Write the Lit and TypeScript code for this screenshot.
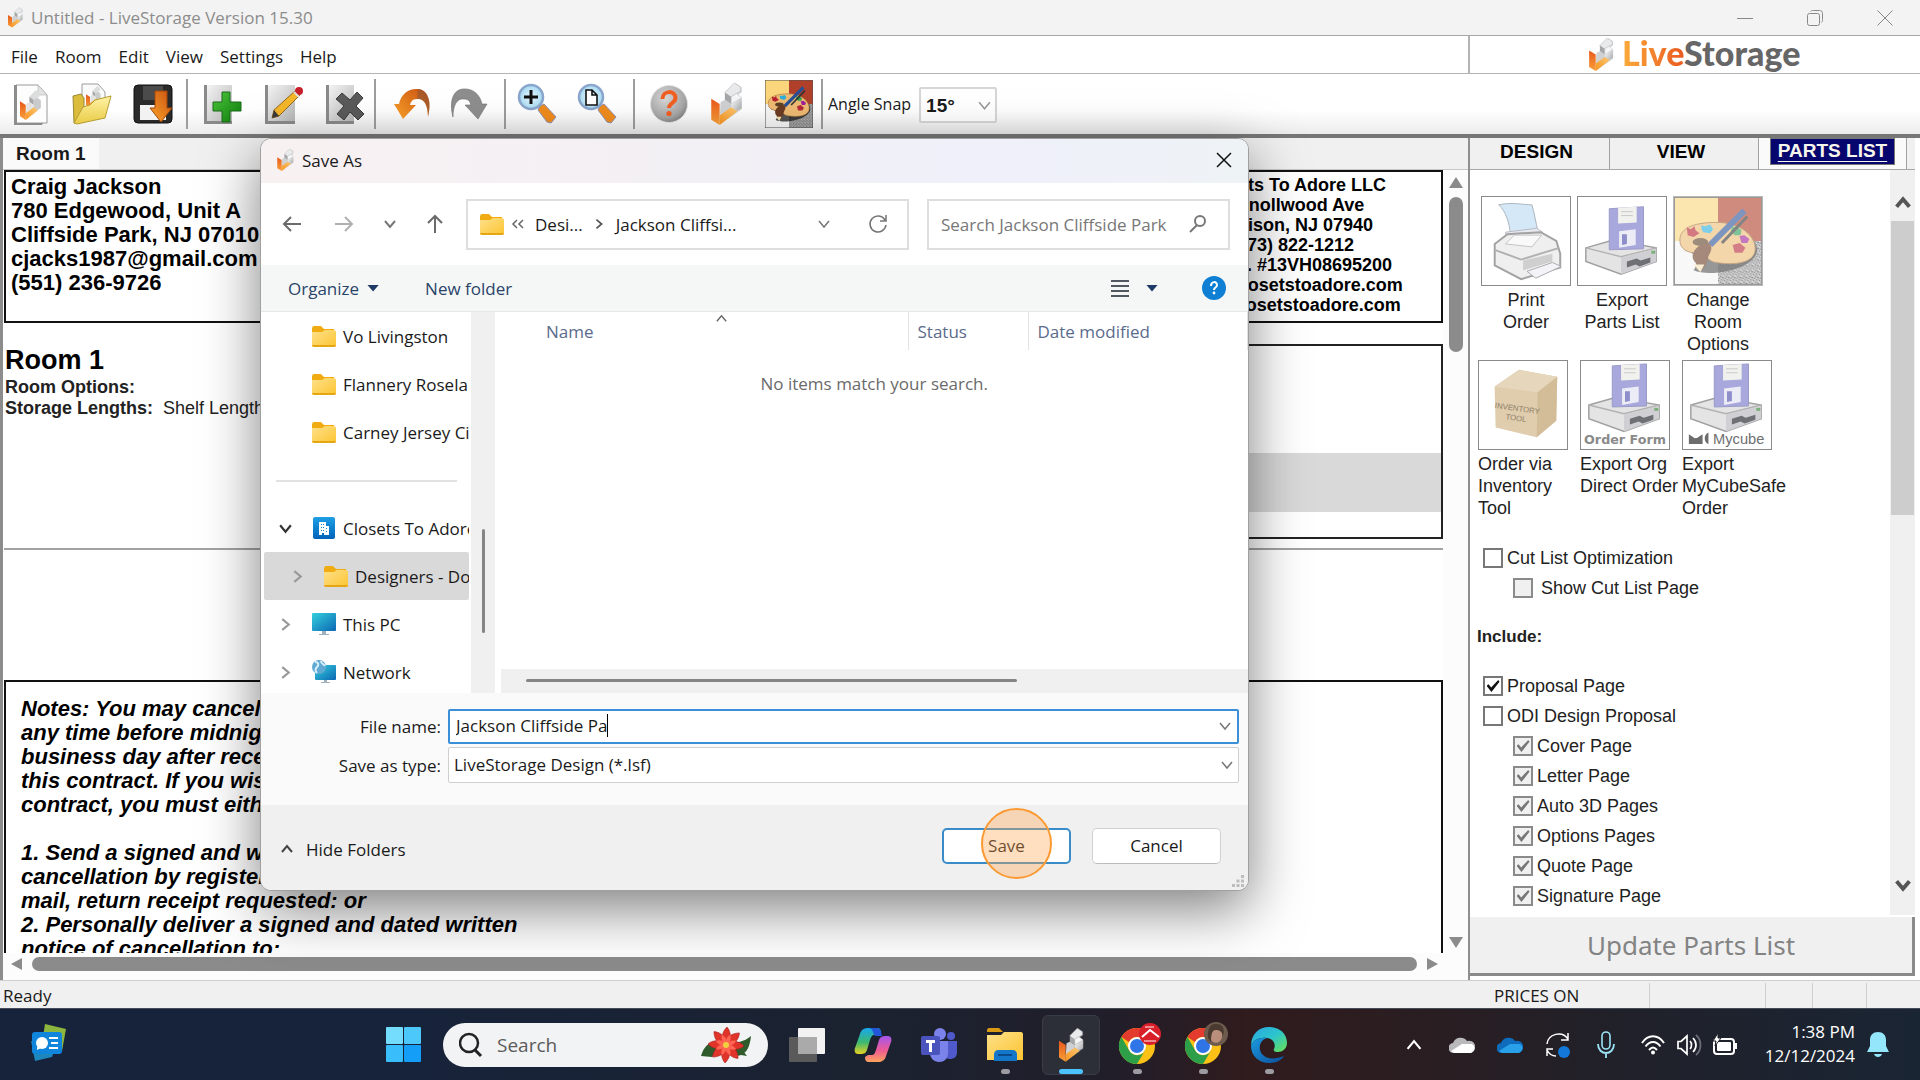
import { LitElement, html, svg, css } from "lit";
import { customElement, state } from "lit/decorators.js";

/* ---------- shared artwork ---------- */

const gradients = html`<svg class="defs" width="0" height="0" aria-hidden="true">
  <defs>
    <linearGradient id="gOrange" x1="0" y1="1" x2="1" y2="0"><stop offset="0" stop-color="#f7941e"/><stop offset="1" stop-color="#fcc873"/></linearGradient>
    <linearGradient id="gRed" x1="0" y1="0" x2="0" y2="1"><stop offset="0" stop-color="#e8581a"/><stop offset="1" stop-color="#f9a13a"/></linearGradient>
    <linearGradient id="gGray" x1="0" y1="0" x2="1" y2="1"><stop offset="0" stop-color="#ffffff"/><stop offset="1" stop-color="#9c9ea0"/></linearGradient>
    <linearGradient id="gPage" x1="0" y1="0" x2="1" y2="1"><stop offset="0" stop-color="#f4f4f4"/><stop offset="1" stop-color="#b4b4b4"/></linearGradient>
    <linearGradient id="gFolder" x1="0" y1="0" x2="1" y2="1"><stop offset="0" stop-color="#ffe08a"/><stop offset="1" stop-color="#fbc532"/></linearGradient>
    <linearGradient id="gOldFolder" x1="0" y1="0" x2="0" y2="1"><stop offset="0" stop-color="#fff3a8"/><stop offset="1" stop-color="#e9cb45"/></linearGradient>
    <linearGradient id="gGreen" x1="0" y1="0" x2="1" y2="1"><stop offset="0" stop-color="#4cc63a"/><stop offset="1" stop-color="#0d7a0d"/></linearGradient>
    <linearGradient id="gUndo" x1="0" y1="1" x2="1" y2="0"><stop offset="0" stop-color="#ffa52a"/><stop offset="1" stop-color="#c64f10"/></linearGradient>
    <linearGradient id="gScreen" x1="0" y1="0" x2="1" y2="1"><stop offset="0" stop-color="#35d0dd"/><stop offset="1" stop-color="#0c67b4"/></linearGradient>
    <linearGradient id="gBlue" x1="0" y1="0" x2="0" y2="1"><stop offset="0" stop-color="#1f9fe6"/><stop offset="1" stop-color="#0063b8"/></linearGradient>
    <linearGradient id="gCopA" x1="0" y1="0" x2="0" y2="1"><stop offset="0" stop-color="#18a7f0"/><stop offset=".55" stop-color="#3cb96f"/><stop offset="1" stop-color="#e8d321"/></linearGradient>
    <linearGradient id="gCopB" x1="0" y1="0" x2="0" y2="1"><stop offset="0" stop-color="#a457ec"/><stop offset=".55" stop-color="#ef5a94"/><stop offset="1" stop-color="#fba35c"/></linearGradient>
    <linearGradient id="gEdgeA" x1="0" y1="0" x2="1" y2="1"><stop offset="0" stop-color="#2aa7e4"/><stop offset=".5" stop-color="#2cc5cc"/><stop offset="1" stop-color="#6be24f"/></linearGradient>
    <linearGradient id="gEdgeB" x1="0" y1="0" x2="1" y2="1"><stop offset="0" stop-color="#1b9be0"/><stop offset="1" stop-color="#0b4f9c"/></linearGradient>
    <radialGradient id="gBall" cx=".4" cy=".35" r=".7"><stop offset="0" stop-color="#d8d8d8"/><stop offset=".75" stop-color="#a5a5a5"/><stop offset="1" stop-color="#7b7b7b"/></radialGradient>
    <radialGradient id="gLens"><stop offset="0" stop-color="#ecfaff"/><stop offset="1" stop-color="#a5d9f2"/></radialGradient>
    <pattern id="pGrain" width="6" height="6" patternUnits="userSpaceOnUse"><rect width="6" height="6" fill="#9b9b9b"/><path d="M0 0h1v1H0zM3 1h1v1H3zM5 3h1v1H5zM1 4h2v1H1zM4 5h1v1H4z" fill="#4a4a4a"/><path d="M2 2h1v1H2zM4 0h1v1H4zM0 5h1v1H0zM3 3h1v1H3z" fill="#d8d8d8"/></pattern>
  </defs>
</svg>`;

const mark = (w: number, h: number) => html`<svg width=${w} height=${h} viewBox="0 0 30 40" aria-hidden="true">
  <path d="M9 30 9 20 14 16 14 10 23 0 29 4 29 9 24 12 29 16 29 25 9 39z" fill="#8b8d8f" opacity=".35"/>
  <path d="M13 9 22 0 28 4 28 8 19 13 19 15z" fill="#e9eaeb" stroke="#b9bbbd" stroke-width=".7"/>
  <path d="M13 9 19 13 19 20 13 16z" fill="#a5a7a9"/>
  <path d="M19 13 24 10 29 14 19 20z" fill="#f6f6f6" stroke="#c0c2c4" stroke-width=".6"/>
  <path d="M19 20 29 14 29 24 19 30z" fill="url(#gGray)"/>
  <path d="M9 18 13 16 19 20 19 29 8 36z" fill="#d0d1d2"/>
  <path d="M0 15 8 20 8 40 0 35z" fill="url(#gRed)"/>
  <path d="M8 31 19 23 25 27 8 40z" fill="url(#gOrange)"/>
</svg>`;

const markShape = (t: string) => svg`<g transform=${t}>
  <path d="M13 9 22 0 28 4 28 8 19 13z" fill="#dcdddd"/><path d="M13 9 19 13 19 20 13 16z" fill="#a5a7a9"/>
  <path d="M19 13 24 10 29 14 29 24 19 30z" fill="#c9cacb"/><path d="M9 18 13 16 19 20 19 29 8 36z" fill="#e3e3e3"/>
  <path d="M0 15 8 20 8 40 0 35z" fill="url(#gRed)"/><path d="M8 31 19 23 25 27 8 40z" fill="url(#gOrange)"/></g>`;

const icoNew = html`<svg width="38" height="44" viewBox="0 0 38 44"><path d="M4 3h22l9 10v28H4z" fill="#fdfdfd" stroke="#9a9a9a"/><path d="M2 3h3v38h26l-1 2H2z" fill="#8d8d8d"/><path d="M26 3l9 10h-9z" fill="#e2e2e2" stroke="#b4b4b4" stroke-width=".6"/>${markShape("translate(8 8) scale(.72 .75)")}</svg>`;
const icoOpen = html`<svg width="42" height="44" viewBox="0 0 42 44"><path d="M12 2h16l7 8v22H12z" fill="#fafafa" stroke="#9a9a9a"/>${markShape("translate(16 4) scale(.5 .55)")}<path d="M3 14l8-2 3 4v24l-10 1z" fill="#dcbc3c" stroke="#9b8a34"/><path d="M13 25l7-2 5-5 16-4-6 22-28 6-3-1z" fill="url(#gOldFolder)" stroke="#b59d32"/></svg>`;
const icoSave = html`<svg width="42" height="44" viewBox="0 0 42 44"><rect x="2" y="3" width="38" height="38" rx="4" fill="#2a2a2a" stroke="#111"/><path d="M11 4h20v14H11z" fill="#4b4b4b"/><path d="M8 23h26v15H8z" fill="#f2f2f2"/><path d="M23 9h12v17h5L29 40 18 26h5z" fill="url(#gUndo)" stroke="#a34708"/></svg>`;
const icoAdd = html`<svg width="42" height="44" viewBox="0 0 42 44"><path d="M4 3h26v38H4z" fill="url(#gPage)"/><path d="M2 3h3v36h25v3H2z" fill="#8a8a8a"/><path d="M20 10h8v10h11v9H28v11h-8V29h-9v-9h9z" fill="url(#gGreen)" stroke="#1a6a1a"/></svg>`;
const icoEdit = html`<svg width="42" height="44" viewBox="0 0 42 44"><path d="M4 3h28v38H4z" fill="url(#gPage)"/><path d="M2 3h3v36h27v3H2z" fill="#8a8a8a"/><path d="M9 36l2-8L32 9l5 4-21 21z" fill="#f4b72a" stroke="#96691a"/><path d="M9 36l2-8 5 6z" fill="#3a3a3a"/><circle cx="36" cy="9" r="4" fill="#c8202a"/><path d="M31 10l5 5" stroke="#ddd" stroke-width="2"/></svg>`;
const icoDel = html`<svg width="42" height="44" viewBox="0 0 42 44"><path d="M4 3h26v38H4z" fill="url(#gPage)"/><path d="M2 3h3v36h25v3H2z" fill="#8a8a8a"/><path d="M18 11l8 7 7-8 6 6-7 8 8 8-6 6-8-8-6 8-7-6 7-8-8-7z" fill="#5a5a5a" stroke="#3b3b3b"/></svg>`;
const icoUndo = html`<svg width="42" height="34" viewBox="0 0 42 34"><path d="M2 17l5 0C9 7 17 1 26 2c10 1 14 12 10 28C36 18 32 11 25 12c-5 0-6 3-7 6h6L11 32z" fill="url(#gUndo)"/><path d="M26 2c10 1 14 12 10 28C36 18 32 11 25 12" fill="#7b5340" opacity=".45"/></svg>`;
const icoRedo = html`<svg width="42" height="34" viewBox="0 0 42 34"><path d="M40 17l-5 0C33 7 25 1 16 2 6 3 2 14 6 30 6 18 10 11 17 12c5 0 6 3 7 6h-6L31 32z" fill="#8e8e8e" stroke="#737373" stroke-width=".6"/></svg>`;
const icoZoom = (inner: unknown) => html`<svg width="42" height="42" viewBox="0 0 42 42"><path d="M24 23l4-2 12 13-5 6-4-1-9-12z" fill="#f08c1e" stroke="#8f8fb0"/><circle cx="15" cy="14" r="12" fill="url(#gLens)" stroke="#8aa6cc" stroke-width="2.5"/>${inner}</svg>`;
const zPlus = svg`<path d="M15 7v14M8 14h14" stroke="#111" stroke-width="3"/>`;
const zPage = svg`<path d="M10 7h6l5 5v10H10z M16 7v5h5" fill="#fff" stroke="#111" stroke-width="1.6"/>`;
const icoHelp = html`<svg width="40" height="40" viewBox="0 0 40 40"><circle cx="20" cy="20" r="18.500" fill="url(#gBall)" stroke="#e2e2e2"/><path d="M13.500 15c0-9 13-9 13-1 0 5-6.500 5-6.500 10" fill="none" stroke="#f15f22" stroke-width="4"/><circle cx="20" cy="29.500" r="2.600" fill="#f15f22"/></svg>`;
const icoPalette = (size: number, cls = "") => html`<svg class=${cls} width=${size} height=${size} viewBox="0 0 90 90"><rect width="45" height="45" fill="#fbd67c"/><rect x="45" width="45" height="45" fill="#b0402a"/><rect y="45" width="45" height="45" fill="#f5f5f5"/><rect x="45" y="45" width="45" height="45" fill="url(#pGrain)"/>
  <path d="M10 57c2-6 20 4 10 18 18 8 66-2 65-22-2-16-30-28-55-24" fill="#1c1c1c" opacity=".75"/>
  <path d="M6 44C6 30 24 26 44 26c24 0 40 14 39 28-1 14-22 16-40 13-8-1-10-8-17-9C14 57 6 54 6 44z" fill="#eebb74" stroke="#9d6b36"/>
  <ellipse cx="27" cy="46" rx="8" ry="4" fill="#5d4126"/><path d="M13 31l4 2 4-3 1 4 4 3-6 4-6-2z" fill="#b8202e"/><path d="M28 29l4 1 5-2 3 5-3 4-7-1-2-3z" fill="#29b0dc"/><path d="M59 31l5-1 5 4-1 5-6 0-4-4z" fill="#2d9b56"/><path d="M67 40l5-1 5 4-2 4-6 0z" fill="#a01e9a"/><path d="M60 49l7-2 6 5-3 5-8 0z" fill="#b62a38"/>
  <path d="M75 20l-26 27" stroke="#333" stroke-width="3"/><path d="M72 14L37 49" stroke="#274f96" stroke-width="6"/><path d="M36 47c-9 0-16 6-17 13 0 7 5 6 8 17 5-6 8-12 8-16 3-6 5-9 1-14z" fill="#6a3c22"/><path d="M20 69l7 8 4-8z" fill="#f3e1b5"/><rect x=".5" y=".5" width="89" height="89" fill="none" stroke="#555"/></svg>`;
const icoPrinter = html`<svg width="90" height="90" viewBox="0 0 90 90"><path d="M17 8c14-3 26 0 34 0 3 10 4 18 6 26l-28 4C28 26 24 14 17 8z" fill="#d5e8f8" stroke="#aab4bc"/><path d="M24 36l32-4 6 4-2 7-34 1z" fill="#e8eaf2" stroke="#b8bac2"/><path d="M13 48l13-10 34-2 16 9 4 13v14l-40 12-27-14z" fill="#efefef" stroke="#a2a2a2" stroke-width="2"/><path d="M13 54l27 10 39-12" fill="none" stroke="#b0b0b0" stroke-width="2"/><path d="M24 48l9-9 28 0-10 12z" fill="#f9f9f9" stroke="#c4c4c4"/><path d="M42 65l30-7v8l-30 9z" fill="#cfcfcf"/><path d="M46 76l26-9 9 4-26 12z" fill="#f4f4f8" stroke="#a9a9b0"/></svg>`;
const diskArt = (dy: number) => svg`<g transform=${`translate(0 ${dy})`}><path d="M8 52l28-8 44 8v14L44 79 8 66z" fill="#e4e4e4" stroke="#a0a0a0" stroke-width="1.500"/><path d="M8 52l36 9 36-9" fill="none" stroke="#b2b2b2" stroke-width="1.500"/><path d="M44 62v17l36-13V53z" fill="#cfcfd4"/><path d="M50 66l10-3 4 2 10-3v5l-11 4-4-2-9 3z" fill="#6f6f76"/><path d="M75 55h4v3h-4z" fill="#7bb07b"/><path d="M32 12l35-2v43l-35 1z" fill="#a8a8dc" stroke="#9a9ac8"/><path d="M41 11l19-1v16l-19 1z" fill="#f1f1ee"/><path d="M44 15h12M44 19h12" stroke="#c9c9c9"/><path d="M42 35l17-2v16l-17 3z" fill="#ececf6"/><path d="M45 38h5v10l-5 1z" fill="#8e8ecb"/></g>`;
const icoExport = html`<svg width="90" height="90" viewBox="0 0 90 90">${diskArt(0)}</svg>`;
const icoOrderForm = html`<svg width="90" height="90" viewBox="0 0 90 90">${diskArt(-7)}<text x="45" y="85" text-anchor="middle" class="t-form">Order Form</text></svg>`;
const icoMycube = html`<svg width="90" height="90" viewBox="0 0 90 90">${diskArt(-7)}<path d="M6 75l6 4 6-1v7H6zM14 79l6-4v10h-6zM26 73v12c-5-2-5-10 0-12z" fill="#6c6c6c"/><text x="57" y="85" text-anchor="middle" class="t-cube">Mycube</text></svg>`;
const icoBox = html`<svg width="90" height="90" viewBox="0 0 90 90"><path d="M16 26l25-17 39 7-1 45-20 17-42-10z" fill="#dfcdae"/><path d="M16 26l44 6 20-16-39-7z" fill="#e6d7bc"/><path d="M60 32l20-16-1 45-20 17z" fill="#d2bd98"/><g transform="rotate(8 38 50)"><text x="39" y="51" text-anchor="middle" class="t-box">INVENTORY</text><text x="39" y="61" text-anchor="middle" class="t-box">TOOL</text></g></svg>`;

const folder = html`<svg class="ico" width="24" height="21" viewBox="0 0 24 21"><path d="M0 3c0-2 1-3 2-3h7l3 3h10v7H0z" fill="#f0ac12"/><path d="M0 6h10l3-2h9c1 0 2 1 2 2v13c0 1-1 2-2 2H2c-1 0-2-1-2-2z" fill="url(#gFolder)"/><path d="M0 19c0 1 1 2 2 2h20c1 0 2-1 2-2z" fill="#e5a614"/></svg>`;
const building = html`<svg class="ico" width="24" height="22" viewBox="-1 0 24 22"><rect width="22" height="22" rx="2" fill="url(#gBlue)"/><path d="M6 5h7v4h3v9h-5v-2H9v2H6z" fill="#fff"/><path d="M8 7h1v1H8zM10 7h1v1h-1zM8 10h1v1H8zM10 10h1v1h-1zM8 13h1v1H8zM10 13h1v1h-1zM13 11h1v1h-1zM13 14h1v1h-1z" fill="#1480cc"/></svg>`;
const pc = html`<svg class="ico" width="24" height="24" viewBox="0 0 24 24"><rect y="1" width="24" height="18" rx="1" fill="url(#gScreen)"/><path d="M10 19h4v3h3v1H7v-1h3z" fill="#9fb0bf"/></svg>`;
const net = html`<svg class="ico" width="24" height="24" viewBox="0 0 24 24"><rect x="3" y="5" width="21" height="15" rx="1" fill="url(#gScreen)"/><path d="M12 20h3v2h3v1H9v-1h3z" fill="#9fb0bf"/><circle cx="7" cy="7" r="7" fill="#5fa9d2"/><path d="M3 2c4 0 4 3 2 5s-2 4 0 6M9 1c0 3 3 3 4 5" stroke="#d9eefb" stroke-width="2" fill="none"/></svg>`;

const chev = (d: "up" | "down" | "right", size = 14, color = "#444", sw = 2) => {
  const p = { up: "M2 10l5-6 5 6", down: "M2 4l5 6 5-6", right: "M4 2l6 5-6 5" }[d];
  return html`<svg class="chev" width=${size} height=${size} viewBox="0 0 14 14"><path d=${p} fill="none" stroke=${color} stroke-width=${sw}/></svg>`;
};

/* ---------- taskbar artwork ---------- */

const icoWidgets = html`<svg width="38" height="38" viewBox="0 0 38 38"><path d="M16 1l21 5-4 22-20-8z" fill="#8cb63e"/><path d="M2 18l24 8-3 8-17 4z" fill="#1c86bd"/><rect x="3" y="9" width="30" height="22" rx="3" fill="#0f86dc"/><circle cx="13" cy="20" r="6" fill="#fff"/><path d="M20 15h9M22 20h7M20 25h9" stroke="#fff" stroke-width="2"/><path d="M8 24v3l4-2z" fill="#fff"/></svg>`;
const icoStart = html`<svg width="36" height="36" viewBox="0 0 36 36"><rect width="17" height="17" rx="1" fill="#74dcfd"/><rect x="18" width="17" height="17" rx="1" fill="#4cc8fb"/><rect y="18" width="17" height="17" rx="1" fill="#3abefb"/><rect x="18" y="18" width="17" height="17" rx="1" fill="#149ef8"/></svg>`;
const petals = [0, 45, 90, 135, 180, 225, 270, 315];
const icoFlower = html`<svg width="52" height="36" viewBox="0 0 52 36"><path d="M1 29C4 18 12 12 22 16L12 30zM51 9C50 20 46 29 36 29L30 16C36 16 44 15 51 9zM40 20l7 9-12-2z" fill="#2f5a2c"/>${petals.map((a) => svg`<path transform=${`rotate(${a} 26 18)`} d="M26 18C20 12 22 5 27 0c5 6 4 13-1 18z" fill="#e0342a" stroke="#a81d1c" stroke-width=".6"/>`)}${petals.map((a) => svg`<path transform=${`rotate(${a + 22} 26 18)`} d="M26 18c-3-4-2-8 0-11 3 3 3 8 0 11z" fill="#ff6552"/>`)}<circle cx="26" cy="18" r="3" fill="#f0d03c"/></svg>`;
const icoTask = html`<svg width="38" height="36" viewBox="0 0 38 36"><rect x="1" y="10" width="28" height="25" rx="1" fill="#5a5a5a"/><rect x="10" y="1" width="27" height="26" rx="1" fill="#f2f2f2"/><path d="M10 10h19v17H10z" fill="#aaaaaa"/></svg>`;
const icoCopilot = html`<svg width="38" height="36" viewBox="0 0 38 36"><path d="M14 1h9c3 0 4 2 4 5l-3 2h-4c-2 0-3 2-4 5l-3 10c-1 3-3 4-6 4H4c-3 0-4-3-3-6L6 7c1-4 4-6 8-6z" fill="url(#gCopA)"/><path d="M14 1h9c3 0 4 3 5 8h-6c-2 0-2-2-3-4-1-3-2-4-5-4z" fill="#2357d8"/><path d="M24 35h-9c-3 0-4-2-4-5l3-2h4c2 0 3-2 4-5l3-10c1-3 3-4 6-4h3c3 0 4 3 3 6l-5 14c-1 4-4 6-8 6z" fill="url(#gCopB)"/></svg>`;
const icoTeams = html`<svg width="38" height="36" viewBox="0 0 38 36"><circle cx="20" cy="7" r="6" fill="#7b83eb"/><circle cx="31" cy="9" r="4" fill="#5059c9"/><path d="M25 14h12v11c0 5-3 7-7 7-3 0-5-2-5-4z" fill="#5059c9"/><path d="M10 14h18v12c0 6-4 9-9 9s-9-4-9-9z" fill="#7b83eb"/><rect x="1" y="9" width="19" height="19" rx="2" fill="#4b53bc"/><path d="M6 13h9v3h-3v9H9v-9H6z" fill="#fff"/></svg>`;
const icoExplorer = html`<svg width="38" height="36" viewBox="0 0 38 36"><path d="M1 3c0-1 1-2 2-2h10l4 4H1z" fill="#d99a12"/><path d="M1 8l14 0 3-3h17c1 0 2 1 2 2v26H1z" fill="url(#gFolder)"/><path d="M8 34v-7c0-2 2-4 4-4h15c2 0 4 2 4 4v7z" fill="#1377c9"/><path d="M12 28h14" stroke="#0a4a8a" stroke-width="2"/></svg>`;
const chromeArt = svg`<circle cx="20" cy="24" r="18" fill="#fbc116"/><path d="M4.400 15A18 18 0 0 1 35.600 15H20a9 9 0 0 0-8 5z" fill="#e33b2e"/><path d="M4.400 15A18 18 0 0 0 20 42l8-13.500A9 9 0 0 1 12 28z" fill="#2d9f48"/><circle cx="20" cy="24" r="9" fill="#fff"/><circle cx="20" cy="24" r="7" fill="#2f75e8"/>`;
const icoChromeA = html`<svg class="spill" width="40" height="46" viewBox="0 0 40 46">${chromeArt}<circle cx="33" cy="12" r="11" fill="#d81f2a"/><path d="M25 15l8-7 9 7" stroke="#fff" stroke-width="2" fill="none"/><path d="M27 19h12M28 5h9" stroke="#ef8b8f" stroke-width="2"/></svg>`;
const icoChromeB = html`<svg class="spill" width="40" height="46" viewBox="0 0 40 46">${chromeArt}<circle cx="33" cy="12" r="12" fill="#6d5b4d"/><path d="M27 9c0-7 12-7 12 0v5c0 9-12 9-12 0z" fill="#b98f7c"/><path d="M25 16C24 4 30 1 34 2c6 0 8 6 6 12-1-5-4-6-7-6s-5 2-5 12z" fill="#4a3a30"/></svg>`;
const icoEdge = html`<svg width="38" height="38" viewBox="0 0 38 38"><path d="M1 20C1 8 9 1 19 1c11 0 18 7 18 16 0 6-5 9-9 9-3 0-5-1-4-3 2-4 0-10-7-11C9 11 3 14 1 20z" fill="url(#gEdgeA)"/><path d="M1 20c2-6 8-9 16-8-6 2-8 7-7 12 2 8 12 11 24 6-3 5-9 7-15 7C9 37 1 30 1 20z" fill="url(#gEdgeB)"/></svg>`;
const icoLens = html`<svg width="24" height="26" viewBox="0 0 24 26"><circle cx="10" cy="11" r="9" fill="none" stroke="#222" stroke-width="2.500"/><path d="M16 18l6 6" stroke="#222" stroke-width="3"/></svg>`;
const cloud = (a: string, b: string) => html`<svg width="26" height="18" viewBox="0 0 26 18"><path d="M5 17a5 5 0 0 1-1-10A8 8 0 0 1 18 5a6 6 0 0 1 4 12z" fill=${a}/><path d="M5 17l-3-2 11-7 10 0a5 5 0 0 1-1 9z" fill=${b}/></svg>`;
const icoSync = html`<svg width="26" height="28" viewBox="0 0 26 28"><path d="M2 13C3 3 17-1 23 8M23 2v7h-7M11 25c-4 0-7-2-9-6M2 25v-7h6" fill="none" stroke="#fff" stroke-width="1.500"/><circle cx="19" cy="21" r="6" fill="#1378d8"/></svg>`;
const icoMic = html`<svg width="20" height="28" viewBox="0 0 20 28"><rect x="6" y="1" width="8" height="17" rx="4" fill="none" stroke="#9be4f6" stroke-width="1.600"/><path d="M2 13c0 12 16 12 16 0M10 22v5" fill="none" stroke="#9be4f6" stroke-width="1.800"/></svg>`;
const icoWifi = html`<svg width="26" height="22" viewBox="0 0 26 22"><path d="M2 9c6-9 16-9 22 0M5.500 12.500c4.500-6 10.500-6 15 0M9 16c3-3.500 5-3.500 8 0" fill="none" stroke="#fff" stroke-width="2"/><circle cx="13" cy="18.500" r="2" fill="#fff"/></svg>`;
const icoSound = html`<svg width="26" height="22" viewBox="0 0 26 22"><path d="M2 7.500h3l6-5.500v18l-6-5.500H2z" fill="none" stroke="#fff" stroke-width="1.700"/><path d="M14 7c2 2 2 6 0 8M17 4c4 4 4 10 0 14" fill="none" stroke="#fff" stroke-width="1.700"/><path d="M20 1c6 5 6 15 0 20" fill="none" stroke="#6d7079" stroke-width="1.700"/></svg>`;
const icoBattery = html`<svg width="26" height="24" viewBox="0 0 26 24"><rect x="2" y="6" width="20" height="15" rx="3" fill="none" stroke="#fff" stroke-width="2"/><rect x="5" y="9" width="14" height="9" rx="1" fill="#fff"/><path d="M23 10h2v6h-2z" fill="#fff"/><path d="M6 0L1 8h3l-1 5 6-8H6z" fill="#fff" stroke="#1d2028"/></svg>`;
const icoBell = html`<svg width="22" height="28" viewBox="0 0 22 28"><path d="M11 1c5 0 8 3 8 8v6l3 6H0l3-6V9c0-5 3-8 8-8zM7 23h8c-1 4-7 4-8 0z" fill="#94e6fb"/></svg>`;

interface CheckRow { id: string; label: string; checked: boolean; disabled?: boolean; nested?: boolean; spaced?: boolean }
interface TreeRow { label: string; icon: unknown; chevron?: "down" | "right"; depth?: number; selected?: boolean }

@customElement("app-root")
export class AppRoot extends LitElement {
  @state() private fileName = "Jackson Cliffside Pa";

  private readonly menus = ["File", "Room", "Edit", "View", "Settings", "Help"];

  private readonly client = ["Craig Jackson", "780 Edgewood, Unit A", "Cliffside Park, NJ 07010", "cjacks1987@gmail.com", "(551) 236-9726"];

  private readonly company = ["Closets To Adore LLC", "3 Knollwood Ave", "Madison, NJ 07940", "(973) 822-1212", "NJ Lic. #13VH08695200", "info@closetstoadore.com", "www.closetstoadore.com"];

  private readonly notes = [
    "Notes: You may cancel this contract at", "any time before midnight of the third", "business day after receiving a copy of",
    "this contract. If you wish to cancel this", "contract, you must either:", "\u00a0", "1. Send a signed and written notice of",
    "cancellation by registered or certified", "mail, return receipt requested: or", "2. Personally deliver a signed and dated written", "notice of cancellation to:",
  ];

  private readonly cutRows: CheckRow[] = [
    { id: "cut", label: "Cut List Optimization", checked: false },
    { id: "cutpage", label: "Show Cut List Page", checked: false, disabled: true, nested: true, spaced: true },
  ];

  private readonly includeRows: CheckRow[] = [
    { id: "proposal", label: "Proposal Page", checked: true },
    { id: "odi", label: "ODI Design Proposal", checked: false },
    { id: "cover", label: "Cover Page", checked: true, disabled: true, nested: true },
    { id: "letter", label: "Letter Page", checked: true, disabled: true, nested: true },
    { id: "auto3d", label: "Auto 3D Pages", checked: true, disabled: true, nested: true },
    { id: "options", label: "Options Pages", checked: true, disabled: true, nested: true },
    { id: "quote", label: "Quote Page", checked: true, disabled: true, nested: true },
    { id: "signature", label: "Signature Page", checked: true, disabled: true, nested: true },
  ];

  private readonly recent: TreeRow[] = [
    { label: "Vo Livingston", icon: folder },
    { label: "Flannery Roseland", icon: folder },
    { label: "Carney Jersey City", icon: folder },
  ];

  private readonly tree: TreeRow[] = [
    { label: "Closets To Adore", icon: building, chevron: "down" },
    { label: "Designers - Documents", icon: folder, chevron: "right", depth: 1, selected: true },
    { label: "This PC", icon: pc, chevron: "right" },
    { label: "Network", icon: net, chevron: "right" },
  ];

  static styles = css`
    :host { display: block; font-family: "Open Sans", "Noto Sans", sans-serif; font-size: 17px; color: #1a1a1a; }
    * { box-sizing: border-box; }
    button { font: inherit; color: inherit; background: none; border: 0; padding: 0; margin: 0; }
    input, select { font: inherit; color: inherit; margin: 0; }
    svg { display: block; flex: none; }
    .defs { position: absolute; }
    .shell { position: relative; display: grid; grid-template-rows: 36px 38px 64px minmax(0, 1fr) 28px 72px; grid-template-columns: minmax(0, 1fr); height: 100vh; overflow: hidden; background: #fff; }

    .titlebar { display: flex; align-items: center; gap: 8px; padding-left: 8px; background: #f3f3f3; border-bottom: 1px solid #a8a8a8; color: #8c8c8c; }
    .winbtns { display: flex; margin-left: auto; }
    .winbtns button { width: 70px; display: grid; place-items: center; height: 32px; }

    .menurow { display: flex; border-bottom: 1px solid #b4b4b4; }
    .menus { display: flex; align-items: center; gap: 17px; padding: 4px 0 0 11px; flex: 1; }
    .brand { width: 452px; border-left: 2px solid #b4b4b4; display: flex; align-items: center; gap: 8px; padding-left: 119px; }
    .word { font: 900 34px/34px Lato, sans-serif; color: #666; padding-bottom: 4px; }
    .word b { font-weight: 900; background: linear-gradient(90deg, #fbab3a, #ea5a20); -webkit-background-clip: text; background-clip: text; color: transparent; }

    .toolbar { display: flex; align-items: center; background: linear-gradient(#fff 60%, #ececec); border-bottom: 4px solid #777; padding-left: 12px; }
    .group { display: flex; align-items: center; gap: 20px; height: 50px; padding-right: 12px; margin-right: 14px; border-right: 2px solid #9d9d9d; }
    .group.rooms { gap: 19px; padding-right: 8px; margin-right: 16px; }
    .group.undo { gap: 13px; padding-right: 15px; margin-right: 10px; }
    .group.zoom { gap: 18px; padding-right: 15px; }
    .group.tight { padding-right: 8px; margin-right: 5px; gap: 22px; }
    .snap { font-size: 16px; margin-right: 8px; }
    .combo { display: grid; align-items: center; }
    .combo > * { grid-area: 1 / 1; }
    .combo > .chev { justify-self: end; margin-right: 5px; pointer-events: none; }
    .combo select { appearance: none; width: 100%; height: 36px; background: #fff; border: 2px solid #d6d6d6; border-radius: 2px; padding: 0 5px; }
    .angle { width: 78px; font: bold 19px "Liberation Sans", sans-serif; padding-top: 2px; }

    .main { display: flex; min-height: 0; border-left: 3px solid #8c8c8c; }
    .pane { flex: 1; min-width: 0; display: grid; grid-template: 32px minmax(0, 1fr) 27px / minmax(0, 1fr) 25px; background: #fcfcfc; }
    .tabs { grid-column: 1 / 3; background: #f0f0f0; border-bottom: 1px solid #c6c6c6; display: flex; }
    .tabs button { background: #fafafa; padding: 0 13px; font: bold 19px "Liberation Sans", sans-serif; }
    .doc { overflow: hidden; background: #fff; font-family: "Liberation Sans", sans-serif; color: #000; padding-left: 1px; }
    .head { display: flex; justify-content: space-between; border: 2px solid #111; height: 153px; padding: 3px 4px; }
    .client { font: bold 22px/24px "Liberation Sans", sans-serif; padding: 0 0 0 1px; }
    .company { font: bold 18px/20px "Liberation Sans", sans-serif; text-align: center; width: 289px; }
    .row2 { display: flex; justify-content: space-between; margin-top: 21px; height: 206px; border-bottom: 2px solid #a2a2a2; }
    .room { font: 18px/21px "Liberation Sans", sans-serif; padding: 0 0 0 1px; color: #222; }
    .room h2 { font: bold 27px/33px "Liberation Sans", sans-serif; color: #000; margin: 0; }
    .room p { margin: 0; white-space: pre; }
    .sheet { width: 55%; height: 195px; border: 2px solid #222; padding-top: 107px; }
    .band { height: 59px; background: #d9d9d9; }
    .notes { border: 2px solid #111; margin-top: 130px; height: 400px; padding: 15px 15px; font: italic bold 22px/24px "Liberation Sans", sans-serif; }
    .notes div, .client div { white-space: nowrap; }
    .vbar { display: flex; flex-direction: column; align-items: center; padding: 7px 0 5px; }
    .vbar .thumb { width: 14px; height: 155px; border-radius: 7px; background: #8b8b8b; margin-top: 8px; }
    .vbar svg:last-child { margin-top: auto; }
    .hbar { display: flex; align-items: center; padding: 0 4px 5px 7px; gap: 8px; }
    .hbar .thumb { flex: 1; height: 14px; border-radius: 7px; background: #8b8b8b; }
    .corner { background: #fcfcfc; }

    .side { width: 452px; border-left: 2px solid #8f8f8f; padding-right: 5px; display: grid; grid-template-rows: 32px minmax(0, 1fr) 65px; font: 18px/22px "Liberation Sans", sans-serif; color: #222; background: #fff; }
    .sidetabs { display: grid; grid-template-columns: 140px 149px 148px 1fr; background: #f0f0f0; border-bottom: 1px solid #a8a8a8; }
    .sidetabs > * { border-right: 1px solid #a2a2a2; display: grid; place-items: center; font: bold 19px/22px "Liberation Sans", sans-serif; color: #000; padding: 0 6px 4px 0; }
    .sidetabs > :last-child { border: 0; }
    .sidetabs .on { background: #fafafa; padding-right: 0; }
    .on span { background: #06066e; color: #f6f6ec; text-decoration: underline; text-underline-offset: 4px; padding: 1px 7px 2px; border: 1px solid #777; }
    .sidebody { display: flex; min-height: 0; }
    .parts { flex: 1; min-width: 0; overflow: hidden; padding: 26px 0 0 7px; }
    .tools { display: flex; align-items: flex-start; gap: 6px; padding-left: 4px; }
    .tools.second { gap: 12px; padding-left: 1px; margin-top: 5px; }
    .tool { width: 90px; text-align: center; }
    .tool svg { border: 1px solid #8a8a8a; margin-bottom: 3px; }
    .tool span { display: block; white-space: pre-line; }
    .second .tool { text-align: left; }
    .second .tool span { white-space: pre; }
    .faded { opacity: .6; }
    .checks { margin-top: 24px; padding-left: 6px; }
    .check { display: flex; align-items: center; gap: 4px; height: 30px; color: #222; }
    .check.nested { padding-left: 30px; }
    .check.spaced { gap: 8px; }
    .check input { appearance: none; width: 20px; height: 20px; border: 2px solid #777; background: #fff; display: grid; place-items: center; }
    .check input:disabled { background: #f0f0f0; border-color: #8a8a8a; }
    .check input:checked::before { content: ""; width: 13px; height: 12px; background: #111; clip-path: polygon(0 48%, 16% 36%, 36% 62%, 90% 0, 100% 14%, 38% 100%); }
    .check input:checked:disabled::before { background: #777; }
    .include { font-weight: bold; font-size: 17px; margin: 23px 0 0; }
    .include + .checks { margin-top: 23px; }
    .sidebar { width: 25px; background: #f0f0f0; display: flex; flex-direction: column; align-items: center; padding: 24px 0 21px; }
    .sidebar .thumb { width: 23px; height: 294px; background: #cdcdcd; margin-top: 9px; }
    .sidebar svg:last-child { margin-top: auto; }
    .update { background: #f0f0f0; border: solid #8a8a8a; border-width: 0 3px 3px 0; color: #838383; font: 26px/30px "Noto Sans", sans-serif; margin: 2px 0 4px; }

    .status { display: flex; align-items: center; background: #f0f0f0; border-top: 1px solid #cfcfcf; padding: 2px 0 0 3px; }
    .cells { margin-left: auto; width: 426px; display: grid; grid-template-columns: 156px 116px 47px 54px 1fr; align-self: stretch; align-items: center; }
    .cells span { border-right: 1px solid #cfcfcf; height: 26px; line-height: 26px; }
    .cells span:last-child { border: 0; }

    .taskbar { position: relative; z-index: 3; display: flex; align-items: center; color: #fff; border-top: 1px solid #454b57; background: linear-gradient(90deg, #16233b 0%, #17233a 22%, #1b2230 45%, #211e2a 58%, #301b1d 65%, #291e22 75%, #20212a 85%, #1a2534 100%); }
    .tb-left { flex: 0 0 20%; padding-left: 29px; }
    .tb-start { width: 40px; display: grid; place-items: center; margin-right: 19px; }
    .tb-search { width: 325px; height: 44px; border-radius: 22px; background: #f2f3f4; display: flex; align-items: center; padding: 0 16px; gap: 14px; color: #555; margin-right: 6px; }
    .tb-search input { flex: 1; min-width: 0; border: 0; background: none; font-size: 19px; padding: 0; outline: 0; }
    .tb-search input::placeholder { color: #5b5b5b; opacity: 1; }
    .app { position: relative; width: 58px; height: 60px; margin: 0 4px; border-radius: 6px; display: grid; place-items: center; }
    .app.active { background: #2d2f38; border: 1px solid #3a3c45; }
    .app.run::after { content: ""; position: absolute; bottom: 1px; width: 9px; height: 5px; border-radius: 3px; background: #9b9ba1; }
    .app.active::after { width: 24px; background: #4cc2ff; bottom: 0; }
    .spill { overflow: visible; }
    .tray { margin-left: auto; display: flex; align-items: center; padding-right: 31px; }
    .tray button { width: 48px; height: 40px; display: grid; place-items: center; }
    .tray .q { width: 36px; }
    .tray .first { margin-left: 5px; }
    .clock { text-align: right; line-height: 24px; width: 112px; margin-right: 12px; padding-bottom: 2px; }
    .tray .bell { width: 22px; }

    .dialog { position: absolute; z-index: 2; left: 260px; top: 138px; width: 989px; height: 753px; border: 1px solid #a0a0a0; border-radius: 11px; background: #fff; overflow: hidden; display: grid; grid-template-rows: 44px 82px 47px minmax(0, 1fr) 112px 85px; box-shadow: 0 18px 56px rgba(0, 0, 0, .5); }
    .d-title { display: flex; align-items: center; gap: 8px; padding: 0 16px 2px; background: linear-gradient(90deg, #f8f1f2, #f3f0f4 40%, #eff0fa 75%, #eef3f6); color: #1a1a1a; }
    .d-title button { margin-left: auto; }
    .d-nav { display: grid; grid-template-columns: 187px 443px 303px; column-gap: 18px; align-items: center; }
    .arrows { display: flex; align-items: center; gap: 32px; padding-left: 21px; }
    .arrows .sm { width: 14px; margin: 0 -3px; }
    .field { height: 51px; border: 2px solid #dedede; display: flex; align-items: center; padding: 0 12px; }
    .crumb { gap: 7px; }
    .crumb .name { margin: 0 3px 0 4px; }
    .crumb .spring { flex: 1; }
    .crumb .reload { margin-left: 30px; margin-right: 7px; }
    .find { padding-right: 20px; }
    .find input { flex: 1; min-width: 0; border: 0; padding: 0; outline: 0; }
    .find input::placeholder { color: #777; opacity: 1; }
    .d-nav .field.crumb { grid-column: 2; }
    .d-cmd { background: #f5f7f7; border-bottom: 1px solid #e6e8e8; display: flex; align-items: center; padding: 0 22px 0 27px; color: #2a4468; }
    .d-cmd .drop { display: flex; align-items: center; gap: 8px; margin-right: 46px; }
    .d-cmd .view { display: flex; align-items: center; gap: 17px; margin: 0 44px 0 auto; }
    .tri { width: 12px; height: 7px; background: #1f3a66; clip-path: polygon(0 0, 100% 0, 50% 100%); }
    .d-body { display: grid; grid-template-columns: 210px 24px 6px minmax(0, 1fr); min-height: 0; }
    .navtree { overflow: hidden; padding: 0 2px 0 3px; }
    .node { display: flex; align-items: center; height: 48px; width: 100%; white-space: nowrap; overflow: hidden; padding-left: 14px; text-align: left; border-radius: 2px; }
    .node.deep { padding-left: 26px; }
    .node.sel { background: #d9d9d9; }
    .node .tw { width: 34px; flex: none; }
    .node .ico { margin-right: 7px; }
    .rule { height: 2px; background: #e2e2e2; margin: 24px 12px 22px; }
    .navbar { background: #f0f0f0; display: flex; justify-content: center; padding-top: 217px; }
    .navbar i { width: 3px; height: 104px; background: #858585; border-radius: 2px; }
    .files { display: flex; flex-direction: column; min-width: 0; }
    .files table { border-collapse: collapse; width: 100%; table-layout: fixed; }
    .files th { height: 38px; text-align: left; font-weight: normal; color: #5a6b8c; border-right: 1px solid #e2e2e2; padding: 0 0 0 9px; }
    .files th.c1 { width: 407px; padding-left: 45px; }
    .files th.c2 { width: 120px; }
    .files td { text-align: center; color: #6a6a6a; padding: 22px 0 0; line-height: 24px; }
    .thname { display: grid; grid-template-columns: 1fr; align-items: center; height: 38px; }
    .thname > * { grid-area: 1 / 1; }
    .thname .chev { align-self: start; margin-left: 169px; }
    .hscroll { margin-top: auto; height: 24px; background: #f0f0f0; padding: 10px 0 0 25px; }
    .hscroll i { display: block; width: 491px; height: 3px; border-radius: 2px; background: #858585; }
    .d-form { background: #fafafa; display: grid; grid-template: 35px 36px / 180px 791px; column-gap: 7px; row-gap: 3px; padding-top: 16px; align-items: center; }
    .d-form label { text-align: right; }
    .namebox { height: 35px; border: 2px solid #3a8fd6; background: #fff; display: flex; align-items: center; padding: 0 5px 2px 6px; border-radius: 2px; }
    .namebox input { field-sizing: content; border: 0; padding: 0; outline: 0; background: none; min-width: 0; }
    .caret { width: 1px; height: 23px; background: #000; margin-right: auto; }
    .d-form .combo select { border-width: 1px; border-color: #cfcfcf; padding: 0 5px 2px; }
    .d-foot { background: #f0f0f0; display: flex; align-items: center; padding: 0 27px 3px 19px; gap: 21px; position: relative; }
    .hide { display: flex; align-items: center; gap: 12px; margin-right: auto; padding-top: 6px; }
    .btn { width: 129px; height: 36px; background: #fff; border: 1px solid #d0d0d0; border-bottom-color: #bcbcbc; border-radius: 5px; padding-bottom: 2px; }
    .btn.primary { border: 2px solid #3a8cc8; }
    .click { position: absolute; left: 720px; top: 3px; width: 71px; height: 71px; border-radius: 50%; border: 2px solid #fb9a33; background: rgba(255, 165, 80, .36); pointer-events: none; }
    .grip { position: absolute; right: 4px; bottom: 3px; }
    .t-form { font: bold 13px "DejaVu Sans", sans-serif; fill: #8a8a8a; }
    .t-cube { font: 15px "Liberation Sans", sans-serif; fill: #6f6f6f; }
    .t-box { font: 8px "Liberation Sans", sans-serif; fill: #8f8069; }
  `;

  private check(r: CheckRow) {
    return html`<label class="check ${r.nested ? "nested" : ""} ${r.spaced ? "spaced" : ""}" for=${r.id}><input type="checkbox" id=${r.id} ?checked=${r.checked} ?disabled=${r.disabled}>${r.label}</label>`;
  }

  private node(n: TreeRow) {
    return html`<button class="node ${n.depth ? "deep" : ""} ${n.selected ? "sel" : ""}">
      <span class="tw">${n.chevron ? chev(n.chevron, 15, n.chevron === "down" ? "#333" : "#999") : ""}</span>${n.icon}<span>${n.label}</span></button>`;
  }

  private tool(icon: unknown, label: string) {
    return html`<button class="tool">${icon}<span>${label}</span></button>`;
  }

  private app(icon: unknown, name: string, cls = "") {
    return html`<button class="app ${cls}" aria-label=${name}>${icon}</button>`;
  }

  private renderDialog() {
    return html`<section class="dialog" role="dialog" aria-label="Save As">
      <header class="d-title">${mark(17, 22)}<span>Save As</span>
        <button aria-label="Close"><svg width="16" height="16" viewBox="0 0 16 16"><path d="M1 1l14 14M15 1L1 15" stroke="#111" stroke-width="1.500"/></svg></button></header>
      <div class="d-nav">
        <div class="arrows">
          <button aria-label="Back"><svg width="20" height="18" viewBox="0 0 20 18"><path d="M19 9H2M9 2L2 9l7 7" fill="none" stroke="#6a6a6a" stroke-width="2"/></svg></button>
          <button aria-label="Forward"><svg width="20" height="18" viewBox="0 0 20 18"><path d="M1 9h17M11 2l7 7-7 7" fill="none" stroke="#b0b0b0" stroke-width="2"/></svg></button>
          <button class="sm" aria-label="Recent">${chev("down", 14, "#777")}</button>
          <button aria-label="Up"><svg width="18" height="20" viewBox="0 0 18 20"><path d="M9 19V2M2 9l7-7 7 7" fill="none" stroke="#6a6a6a" stroke-width="2"/></svg></button>
        </div>
        <div class="field crumb">${folder}
          <svg width="13" height="12" viewBox="0 0 13 12"><path d="M6 2L2 6l4 4M12 2L8 6l4 4" fill="none" stroke="#666" stroke-width="1.500"/></svg>
          <span class="name">Desi...</span>${chev("right", 12, "#555", 2)}<span class="name">Jackson Cliffsi...</span>
          <span class="spring"></span>${chev("down", 14, "#777", 1.5)}
          <svg class="reload" width="20" height="20" viewBox="0 0 20 20"><path d="M17 6a8 8 0 1 0 1 5M18 1v6h-6" fill="none" stroke="#777" stroke-width="1.600"/></svg></div>
        <div class="field find"><input aria-label="Search folder" placeholder="Search Jackson Cliffside Park">
          <svg width="20" height="20" viewBox="0 0 20 20"><circle cx="12" cy="7" r="5" fill="none" stroke="#777" stroke-width="2"/><path d="M9 11l-7 7" stroke="#777" stroke-width="2"/></svg></div>
      </div>
      <div class="d-cmd">
        <button class="drop">Organize <span class="tri"></span></button><button>New folder</button>
        <button class="view" aria-label="Change view"><svg width="18" height="18" viewBox="0 0 18 18"><path d="M0 2h18M0 7h18M0 12h18M0 17h18" stroke="#1c2431" stroke-width="1.500"/></svg><span class="tri"></span></button>
        <button aria-label="Help"><svg width="24" height="24" viewBox="0 0 24 24"><circle cx="12" cy="12" r="12" fill="#0f7fd4"/><path d="M9 10c0-5 6-5 6-1 0 3-3 2-3 5" fill="none" stroke="#fff" stroke-width="2"/><circle cx="12" cy="17" r="1.400" fill="#fff"/></svg></button>
      </div>
      <div class="d-body">
        <nav class="navtree">${this.recent.map((n) => this.node(n))}<div class="rule"></div>${this.tree.map((n) => this.node(n))}</nav>
        <div class="navbar"><i></i></div><div></div>
        <div class="files">
          <table><thead><tr><th class="c1"><div class="thname"><span>Name</span>${chev("up", 13, "#666", 1.5)}</div></th><th class="c2">Status</th><th>Date modified</th></tr></thead>
            <tbody><tr><td colspan="3">No items match your search.</td></tr></tbody></table>
          <div class="hscroll"><i></i></div>
        </div>
      </div>
      <div class="d-form">
        <label for="fname">File name:</label>
        <div class="namebox"><input id="fname" .value=${this.fileName} @input=${(e: Event) => (this.fileName = (e.target as HTMLInputElement).value)}><span class="caret"></span>${chev("down", 14, "#777", 1.5)}</div>
        <label for="ftype">Save as type:</label>
        <div class="combo"><select id="ftype"><option>LiveStorage Design (*.lsf)</option></select>${chev("down", 14, "#777", 1.5)}</div>
      </div>
      <footer class="d-foot">
        <button class="hide">${chev("up", 14, "#444")}Hide Folders</button>
        <button class="btn primary">Save</button><button class="btn">Cancel</button>
        <span class="click"></span>
        <svg class="grip" width="12" height="12" viewBox="0 0 12 12"><path d="M9 0h3v3H9zM9 4.500h3v3H9zM4.500 4.500h3v3h-3zM9 9h3v3H9zM4.500 9h3v3h-3zM0 9h3v3H0z" fill="#bdbdbd"/></svg>
      </footer>
    </section>`;
  }

  private renderDocument() {
    const tri = (d: string) => html`<svg width="14" height="12" viewBox="0 0 14 12"><path d=${d} fill="#8b8b8b"/></svg>`;
    return html`<div class="pane">
      <div class="tabs"><button>Room 1</button></div>
      <article class="doc">
        <div class="head"><div class="client">${this.client.map((l) => html`<div>${l}</div>`)}</div><div class="company">${this.company.map((l) => html`<div>${l}</div>`)}</div></div>
        <div class="row2"><div class="room"><h2>Room 1</h2><p><b>Room Options:</b></p><p><b>Storage Lengths:</b>  Shelf Lengths</p></div><div class="sheet"><div class="band"></div></div></div>
        <div class="notes">${this.notes.map((l) => html`<div>${l}</div>`)}</div>
      </article>
      <div class="vbar">${tri("M7 0l7 11H0z")}<div class="thumb"></div>${tri("M7 12l7-11H0z")}</div>
      <div class="hbar">${tri("M1 6l11-6v12z")}<div class="thumb"></div>${tri("M13 6L2 0v12z")}</div>
      <div class="corner"></div>
    </div>`;
  }

  private renderSide() {
    return html`<aside class="side">
      <div class="sidetabs"><button>DESIGN</button><button>VIEW</button><button class="on"><span>PARTS LIST</span></button><i></i></div>
      <div class="sidebody">
        <div class="parts">
          <div class="tools">${this.tool(icoPrinter, "Print\nOrder")}${this.tool(icoExport, "Export\nParts List")}${this.tool(icoPalette(90, "faded"), "Change\nRoom\nOptions")}</div>
          <div class="tools second">${this.tool(icoBox, "Order via\nInventory\nTool")}${this.tool(icoOrderForm, "Export Org\nDirect Order")}${this.tool(icoMycube, "Export\nMyCubeSafe\nOrder")}</div>
          <div class="checks">${this.cutRows.map((r) => this.check(r))}</div>
          <p class="include">Include:</p>
          <div class="checks">${this.includeRows.map((r) => this.check(r))}</div>
        </div>
        <div class="sidebar">${chev("up", 18, "#555", 3)}<div class="thumb"></div>${chev("down", 18, "#555", 3)}</div>
      </div>
      <button class="update">Update Parts List</button>
    </aside>`;
  }

  private renderTaskbar() {
    return html`<footer class="taskbar">
      <div class="tb-left"><button aria-label="Widgets">${icoWidgets}</button></div>
      <button class="tb-start" aria-label="Start">${icoStart}</button>
      <div class="tb-search">${icoLens}<input aria-label="Search" placeholder="Search">${icoFlower}</div>
      ${this.app(icoTask, "Task view")}${this.app(icoCopilot, "Copilot")}${this.app(icoTeams, "Teams")}${this.app(icoExplorer, "File Explorer", "run")}
      ${this.app(mark(25, 34), "LiveStorage", "run active")}${this.app(icoChromeA, "Chrome", "run")}${this.app(icoChromeB, "Chrome profile", "run")}${this.app(icoEdge, "Edge", "run")}
      <div class="tray">
        <button aria-label="Hidden icons">${chev("up", 18, "#fff", 1.7)}</button><button aria-label="Cloud">${cloud("#b9b9bb", "#fff")}</button>
        <button aria-label="OneDrive">${cloud("#0f6cbd", "#28a0ea")}</button><button aria-label="Sync">${icoSync}</button><button aria-label="Microphone">${icoMic}</button>
        <button class="q first" aria-label="Wi-Fi">${icoWifi}</button><button class="q" aria-label="Volume">${icoSound}</button><button class="q" aria-label="Battery">${icoBattery}</button>
        <div class="clock">1:38 PM<br>12/12/2024</div><button class="bell" aria-label="Notifications">${icoBell}</button>
      </div>
    </footer>`;
  }

  render() {
    return html`${gradients}<div class="shell">
      <header class="titlebar">${mark(15, 23)}<span>Untitled - LiveStorage Version 15.30</span>
        <div class="winbtns">
          <button aria-label="Minimize"><svg width="16" height="16" viewBox="0 0 16 16"><path d="M0 8.500h16" stroke="#888"/></svg></button>
          <button aria-label="Restore"><svg width="16" height="16" viewBox="0 0 16 16"><rect x=".5" y="3.500" width="12" height="12" rx="2" fill="none" stroke="#888"/><path d="M3.500 1.500c1-1 1-1 3-1h6c2 0 3 1 3 3v6c0 2 0 2-1 3" fill="none" stroke="#888"/></svg></button>
          <button aria-label="Close"><svg width="16" height="16" viewBox="0 0 16 16"><path d="M.5.5l15 15M15.500.5l-15 15" stroke="#888"/></svg></button>
        </div></header>
      <div class="menurow"><nav class="menus">${this.menus.map((m) => html`<button>${m}</button>`)}</nav>
        <div class="brand">${mark(25, 33)}<span class="word"><b>Live</b>Storage</span></div></div>
      <div class="toolbar">
        <div class="group"><button aria-label="New">${icoNew}</button><button aria-label="Open">${icoOpen}</button><button aria-label="Save">${icoSave}</button></div>
        <div class="group rooms"><button aria-label="Add">${icoAdd}</button><button aria-label="Edit">${icoEdit}</button><button aria-label="Delete">${icoDel}</button></div>
        <div class="group undo"><button aria-label="Undo">${icoUndo}</button><button aria-label="Redo">${icoRedo}</button></div>
        <div class="group zoom"><button aria-label="Zoom in">${icoZoom(zPlus)}</button><button aria-label="Zoom page">${icoZoom(zPage)}</button></div>
        <div class="group tight"><button aria-label="Help">${icoHelp}</button><button aria-label="LiveStorage">${mark(32, 42)}</button><button aria-label="Materials">${icoPalette(48)}</button></div>
        <label class="snap" for="angle">Angle Snap</label>
        <div class="combo angle"><select id="angle"><option>15°</option></select>${chev("down", 15, "#999", 1.5)}</div>
      </div>
      <main class="main">${this.renderDocument()}${this.renderSide()}</main>
      <div class="status"><span>Ready</span><div class="cells"><span>PRICES ON</span><span></span><span></span><span></span><span></span></div></div>
      ${this.renderTaskbar()}
      ${this.renderDialog()}
    </div>`;
  }
}
